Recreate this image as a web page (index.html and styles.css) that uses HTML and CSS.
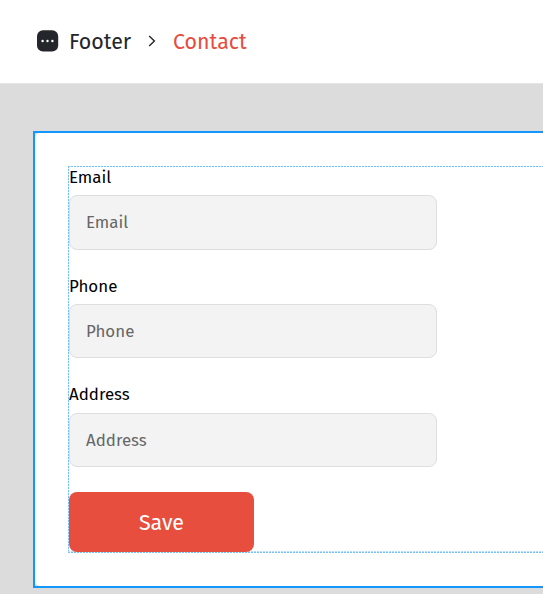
FILE: index.html
```html
<!DOCTYPE html>
<html lang="en">
<head>
<meta charset="utf-8">
<title>Footer – Contact</title>
<link rel="stylesheet" href="styles.css">
</head>
<body>
<header class="breadcrumb">
  <svg class="crumb-icon" width="22" height="22" viewBox="0 0 22 22"><rect x="0" y="0.2" width="21.2" height="21.4" rx="6" fill="#24262b"/><g fill="#fff"><circle cx="5.6" cy="11" r="1.2"/><circle cx="10.5" cy="11" r="1.2"/><circle cx="15.4" cy="11" r="1.2"/></g></svg>
  <span class="crumb">Footer</span>
  <svg class="chevron" width="8" height="12" viewBox="0 0 8 12"><path d="M1.2 .9 6.4 6 1.2 11.1" fill="none" stroke="#24262b" stroke-width="1.4"/></svg>
  <span class="crumb current">Contact</span>
</header>
<main class="canvas">
  <section class="panel">
    <div class="sheet">
      <form class="form">
        <div class="field"><label class="label">Email</label><div class="input">Email</div></div>
        <div class="field"><label class="label">Phone</label><div class="input">Phone</div></div>
        <div class="field"><label class="label">Address</label><div class="input">Address</div></div>
        <button class="save" type="button">Save</button>
      </form>
    </div>
  </section>
</main>
</body>
</html>
```
FILE: styles.css
```css
* { box-sizing: border-box; }
body {
  margin: 0;
  height: 594px;
  overflow: hidden;
  background: #fff;
  font-family: "Fira Sans", "Noto Sans", sans-serif;
}
.breadcrumb {
  display: flex;
  align-items: center;
  height: 83px;
  padding-left: 37px;
}
.crumb-icon { margin-top: -1px; }
.crumb {
  width: 62px;
  margin: 0 0 0 10px;
  font-size: 21.4px;
  line-height: 30px;
  color: #24262b;
}
.chevron { margin: -1px 0 0 17px; }
.crumb.current { width: 74px; margin-left: 17px; color: #e74c3c; }
.canvas {
  height: 511px;
  padding: 47px 0 0 33px;
  border-top: 1px solid #e5e5e5;
  background: #dcdcdc;
}
.panel {
  height: 457px;
  border: 2px solid #1496ff;
  border-right: 0;
  background: #dcdcdc;
}
.sheet {
  height: 453px;
  padding: 33px 0 0 33px;
  border-radius: 5px 0 0 5px;
  background: #fff;
}
.form {
  height: 387px;
  padding: 0 0 0 1px;
  background:
    repeating-linear-gradient(90deg, #72c1fc 0 2px, #e3f3ff 2px 3px) 0 0 / 100% 1px no-repeat,
    repeating-linear-gradient(90deg, #b3ddff 0 2px, #fff 2px 3px) 0 385px / 100% 1px no-repeat,
    repeating-linear-gradient(90deg, #72c1fc 0 2px, #fff 2px 3px) 0 386px / 100% 1px no-repeat,
    repeating-linear-gradient(180deg, #72c1fc 0 2px, #d9eeff 2px 3px) 0 0 / 1px 100% no-repeat;
}
.field { height: 108.7px; }
.label {
  display: block;
  height: 29.2px;
  font-size: 16.9px;
  line-height: 22.6px;
  color: #000;
}
.input {
  width: 368px;
  height: 54.5px;
  padding-left: 16px;
  border: 1px solid #dedede;
  border-radius: 8px;
  background: #f3f3f3;
  font-size: 16.9px;
  line-height: 53px;
  color: #666;
}
.save {
  display: block;
  width: 185px;
  height: 60px;
  margin: 0;
  padding: 2px 0 0;
  border: 0;
  border-radius: 8px;
  background: #e74e3e;
  color: #fff;
  font: 21.4px/58px "Fira Sans", "Noto Sans", sans-serif;
  text-align: center;
}
```
